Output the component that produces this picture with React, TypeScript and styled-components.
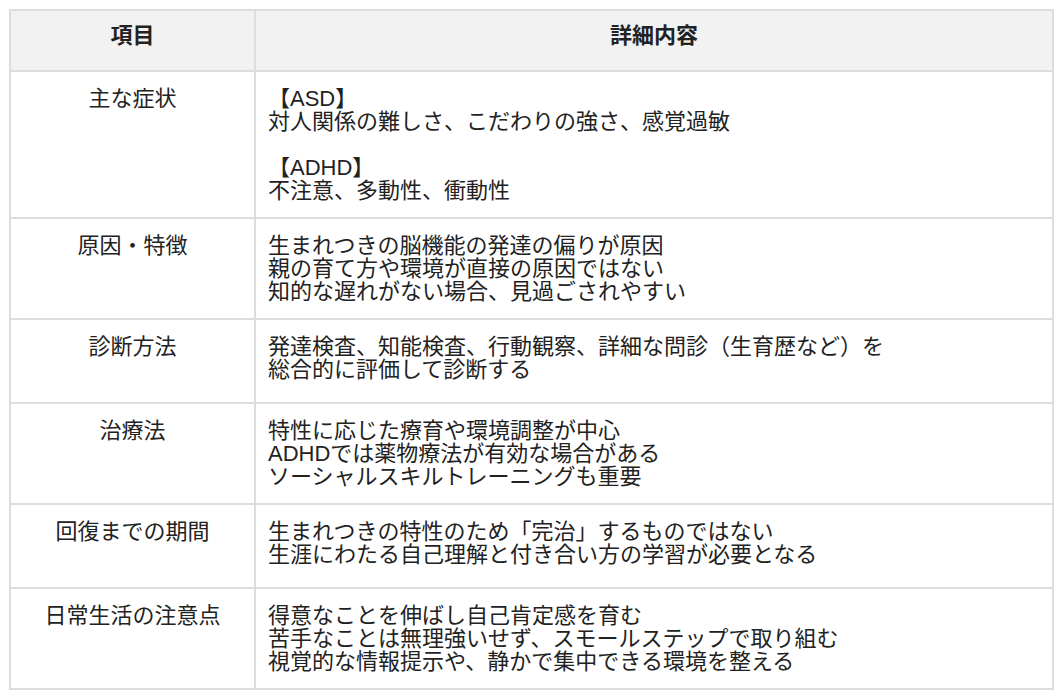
import React from "react";
import styled, { createGlobalStyle } from "styled-components";

const GlobalStyle = createGlobalStyle`
  html, body {
    margin: 0;
    padding: 0;
    background: #ffffff;
  }
  body {
    font-family: "Liberation Sans", "Noto Sans CJK JP", sans-serif;
    color: #222222;
  }
`;

const Page = styled.div`
  padding: 9px;
`;

const Table = styled.table`
  width: 100%;
  border-collapse: separate;
  border-spacing: 0;
  border-top: 2px solid #dddddd;
  border-left: 2px solid #dddddd;
  font-size: 22px;
  line-height: 23px;
`;

const HeadCell = styled.th<{ $wide?: boolean }>`
  background: #f2f2f2;
  font-weight: bold;
  text-align: center;
  padding: 13px 12px 23px;
  border-right: 2px solid #dddddd;
  border-bottom: 2px solid #dddddd;
  width: ${(p) => (p.$wide ? "auto" : "219px")};
`;

const LabelCell = styled.td`
  text-align: center;
  vertical-align: top;
  padding: 15px 12px;
  height: 52px;
  border-right: 2px solid #dddddd;
  border-bottom: 2px solid #dddddd;
`;

const DetailCell = styled.td`
  text-align: left;
  vertical-align: top;
  padding: 15px 12px;
  height: 52px;
  border-right: 2px solid #dddddd;
  border-bottom: 2px solid #dddddd;
`;

const Para = styled.p`
  margin: 0;
  & + & {
    margin-top: 23px;
  }
`;

type Row = {
  label: string;
  paras: string[][];
};

const rows: Row[] = [
  {
    label: "主な症状",
    paras: [
      ["【ASD】", "対人関係の難しさ、こだわりの強さ、感覚過敏"],
      ["【ADHD】", "不注意、多動性、衝動性"],
    ],
  },
  {
    label: "原因・特徴",
    paras: [
      [
        "生まれつきの脳機能の発達の偏りが原因",
        "親の育て方や環境が直接の原因ではない",
        "知的な遅れがない場合、見過ごされやすい",
      ],
    ],
  },
  {
    label: "診断方法",
    paras: [
      [
        "発達検査、知能検査、行動観察、詳細な問診（生育歴など）を",
        "総合的に評価して診断する",
      ],
    ],
  },
  {
    label: "治療法",
    paras: [
      [
        "特性に応じた療育や環境調整が中心",
        "ADHDでは薬物療法が有効な場合がある",
        "ソーシャルスキルトレーニングも重要",
      ],
    ],
  },
  {
    label: "回復までの期間",
    paras: [
      [
        "生まれつきの特性のため「完治」するものではない",
        "生涯にわたる自己理解と付き合い方の学習が必要となる",
      ],
    ],
  },
  {
    label: "日常生活の注意点",
    paras: [
      [
        "得意なことを伸ばし自己肯定感を育む",
        "苦手なことは無理強いせず、スモールステップで取り組む",
        "視覚的な情報提示や、静かで集中できる環境を整える",
      ],
    ],
  },
];

export default function App() {
  return (
    <>
      <GlobalStyle />
      <Page>
        <Table>
          <thead>
            <tr>
              <HeadCell>項目</HeadCell>
              <HeadCell $wide>詳細内容</HeadCell>
            </tr>
          </thead>
          <tbody>
            {rows.map((row) => (
              <tr key={row.label}>
                <LabelCell>{row.label}</LabelCell>
                <DetailCell>
                  {row.paras.map((lines, i) => (
                    <Para key={i}>
                      {lines.map((line, j) => (
                        <React.Fragment key={j}>
                          {j > 0 && <br />}
                          {line}
                        </React.Fragment>
                      ))}
                    </Para>
                  ))}
                </DetailCell>
              </tr>
            ))}
          </tbody>
        </Table>
      </Page>
    </>
  );
}
